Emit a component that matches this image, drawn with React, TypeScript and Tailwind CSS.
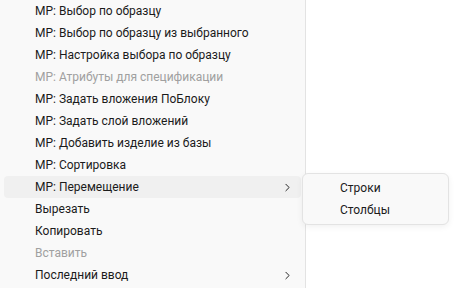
import { ChevronRight } from "lucide-react";

type Item = { label: string; disabled?: boolean; sub?: boolean; active?: boolean };

const items: Item[] = [
  { label: "МР: Выбор по образцу" },
  { label: "МР: Выбор по образцу из выбранного" },
  { label: "МР: Настройка выбора по образцу" },
  { label: "МР: Атрибуты для спецификации", disabled: true },
  { label: "МР: Задать вложения ПоБлоку" },
  { label: "МР: Задать слой вложений" },
  { label: "МР: Добавить изделие из базы" },
  { label: "МР: Сортировка" },
  { label: "МР: Перемещение", sub: true, active: true },
  { label: "Вырезать" },
  { label: "Копировать" },
  { label: "Вставить", disabled: true },
  { label: "Последний ввод", sub: true },
];

const MenuRow = ({ item }: { item: Item }) => (
  <div
    className={`mx-1 flex h-[22px] items-center rounded-[4px] pl-[31px] pr-[7px] ${
      item.active ? "bg-[#f0f0f0]" : ""
    } ${item.disabled ? "text-[#a0a0a0]" : "text-[#1b1b1b]"}`}
  >
    <span className="flex-1 whitespace-nowrap">{item.label}</span>
    {item.sub && <ChevronRight className="h-[13px] w-[13px] text-[#222]" strokeWidth={1.8} />}
  </div>
);

export default function App() {
  return (
    <div className="relative flex h-[288px] w-[455px] overflow-hidden bg-white font-['Roboto','Liberation_Sans',sans-serif] text-[12px]">
      <div className="w-[306px] border-r border-[#e3e3e3] bg-[#f9f9f9]">
        {items.map((item) => (
          <MenuRow key={item.label} item={item} />
        ))}
      </div>

      <div className="absolute left-[302px] top-[173px] w-[147px] rounded-[6px] border border-[#e3e3e3] bg-[#f9f9f9] py-[3px] shadow-[0_2px_6px_rgba(0,0,0,0.06)]">
        <div className="flex h-[22px] items-center pl-[37px] text-[#1b1b1b]">Строки</div>
        <div className="flex h-[22px] items-center pl-[37px] text-[#1b1b1b]">Столбцы</div>
      </div>
    </div>
  );
}
